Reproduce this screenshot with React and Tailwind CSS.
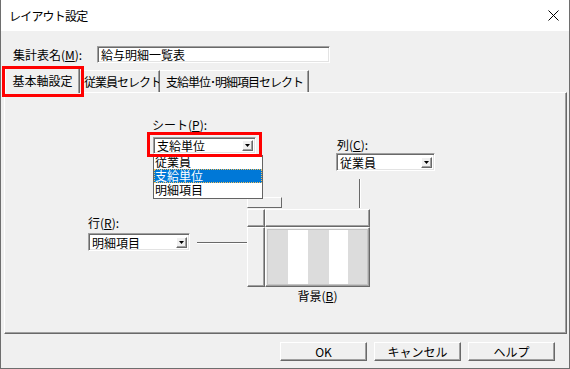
const font = "font-['Noto_Sans_CJK_JP','Noto_Sans',sans-serif]"

const raised =
  'border border-t-white border-l-white border-b-[#696969] border-r-[#696969] shadow-[inset_-1px_-1px_0_#a0a0a0]'
const sunken =
  'border border-t-[#a0a0a0] border-l-[#a0a0a0] border-b-white border-r-white shadow-[inset_1px_1px_0_#696969,inset_-1px_-1px_0_#e3e3e3]'

function Combo({ value, className }) {
  return (
    <div className={`absolute bg-white flex items-center justify-between pl-[3px] pr-[2px] ${sunken} ${className}`}>
      <span className="text-[12px] leading-[13px] text-black whitespace-nowrap">{value}</span>
      <span className={`w-[11px] h-[11px] bg-[#f0f0f0] flex items-center justify-center ${raised}`}>
        <svg width="5" height="3" viewBox="0 0 5 3">
          <path d="M0 0h5L2.5 3z" fill="#000" />
        </svg>
      </span>
    </div>
  )
}

function Btn({ children }) {
  return (
    <button className={`w-[87px] h-[19px] bg-[#f0f0f0] text-[12px] leading-[14px] text-black ${raised}`}>
      {children}
    </button>
  )
}

export default function App() {
  return (
    <div className={`w-[570px] h-[369px] bg-[#f0f0f0] border-x border-b border-[#6e6e6e] flex flex-col text-black ${font}`}>
      {/* title bar */}
      <div className="h-[31px] bg-white flex items-center justify-between pl-[8px] pr-[10px] shrink-0">
        <span className="text-[12px] leading-[14px] tracking-[-0.8px]">レイアウト設定</span>
        <svg width="11" height="11" viewBox="0 0 11 11">
          <path d="M0.5 0.5L10.5 10.5M10.5 0.5L0.5 10.5" stroke="#000" strokeWidth="1" />
        </svg>
      </div>

      {/* name row */}
      <div className="mt-[15px] flex items-center pl-[12px] h-[17px] shrink-0">
        <span className="w-[84px] text-[12px] leading-[14px] whitespace-nowrap">
          集計表名(<span className="underline">M</span>):
        </span>
        <div className={`w-[233px] h-[17px] bg-white flex items-center pl-[3px] ${sunken}`}>
          <span className="text-[12px] leading-[13px]">給与明細一覧表</span>
        </div>
      </div>

      {/* tabs */}
      <div className="mt-[4px] h-[26px] flex items-end pl-[4px] -mb-px relative z-10 shrink-0">
        <div className="relative w-[75px] h-[25px] bg-[#f0f0f0] border-t border-l border-white border-r border-r-[#696969] shadow-[inset_-1px_0_0_#a0a0a0] flex items-center justify-center text-[12px] leading-[14px] whitespace-nowrap">
          基本軸設定
          <div className="absolute -left-[4px] -right-[5px] -top-[3px] -bottom-[4px] border-[3px] border-[#ff0000] pointer-events-none" />
        </div>
        <div className="w-[80px] h-[22px] mb-px border-t border-white border-r border-r-[#696969] shadow-[inset_-1px_0_0_#a0a0a0] flex items-center pl-[4px] text-[12px] leading-[14px] tracking-[-1px] whitespace-nowrap overflow-hidden">
          従業員セレクト
        </div>
        <div className="w-[149px] h-[22px] mb-px border-t border-white border-r border-r-[#696969] shadow-[inset_-1px_0_0_#a0a0a0] flex items-center pl-[6px] text-[12px] leading-[14px] tracking-[-1px] whitespace-nowrap overflow-hidden">
          支給単位･明細項目セレクト
        </div>
      </div>

      {/* panel */}
      <div className="relative ml-[3px] mr-[2px] h-[242px] shrink-0 border border-t-white border-l-white border-b-[#696969] border-r-[#696969] shadow-[inset_-1px_-1px_0_#a0a0a0]">
        {/* sheet */}
        <span className="absolute left-[147px] top-[25px] text-[12px] leading-[14px]">
          シート(<span className="underline">P</span>):
        </span>
        <div className="absolute left-[242px] top-[104px] w-[35px] h-[11px] bg-[#f0f0f0] border border-t-white border-l-white border-b-[#696969] border-r-[#696969]" />
        <Combo value="支給単位" className="left-[148px] top-[44px] w-[103px] h-[17px]" />
        <div className="absolute left-[148px] top-[62px] w-[110px] h-[44px] bg-white border border-[#646464] z-10 flex flex-col text-[12px] leading-[14px] overflow-hidden">
          <div className="h-[14px] pl-px -mt-px">従業員</div>
          <div className="h-[14px] pl-px bg-[#0078d7] text-white outline-1 outline-dotted outline-[#f5c05a] -outline-offset-1">支給単位</div>
          <div className="h-[14px] pl-px">明細項目</div>
        </div>
        <div className="absolute left-[142px] top-[39px] w-[115px] h-[25px] border-[3px] border-[#ff0000] z-20" />

        {/* column */}
        <span className="absolute left-[332px] top-[45px] text-[12px] leading-[14px]">
          列(<span className="underline">C</span>):
        </span>
        <Combo value="従業員" className="left-[331px] top-[60px] w-[99px] h-[18px]" />
        <div className="absolute left-[354px] top-[86px] w-[2px] h-[29px] border-l border-[#696969] border-r border-r-white" />

        {/* row */}
        <span className="absolute left-[83px] top-[123px] text-[12px] leading-[14px]">
          行(<span className="underline">R</span>):
        </span>
        <Combo value="明細項目" className="left-[83px] top-[140px] w-[102px] h-[18px]" />
        <div className="absolute left-[192px] top-[149px] w-[50px] h-[2px] border-t border-[#696969] border-b border-b-white" />

        {/* grid diagram */}
        <div className={`absolute left-[242px] top-[116px] w-[18px] h-[18px] ${raised}`} />
        <div className={`absolute left-[260px] top-[116px] w-[105px] h-[18px] ${raised}`} />
        <div className={`absolute left-[242px] top-[134px] w-[18px] h-[60px] ${raised}`} />
        <div className={`absolute left-[260px] top-[134px] w-[105px] h-[60px] p-px ${raised}`}>
          <div className="w-full h-full border border-[#c4c4c4] flex">
            <div className="w-[20px] bg-[#dcdcdc]" />
            <div className="w-[20px] bg-white" />
            <div className="w-[21px] bg-[#dcdcdc]" />
            <div className="w-[19px] bg-white" />
            <div className="flex-1 bg-[#dcdcdc]" />
          </div>
        </div>
        <span className="absolute left-[260px] top-[196px] w-[105px] text-center text-[12px] leading-[14px]">
          背景(<span className="underline">B</span>)
        </span>
      </div>

      {/* buttons */}
      <div className="mt-[8px] flex justify-end gap-[7px] pr-[14px] shrink-0">
        <Btn>OK</Btn>
        <Btn>キャンセル</Btn>
        <Btn>ヘルプ</Btn>
      </div>
    </div>
  )
}
